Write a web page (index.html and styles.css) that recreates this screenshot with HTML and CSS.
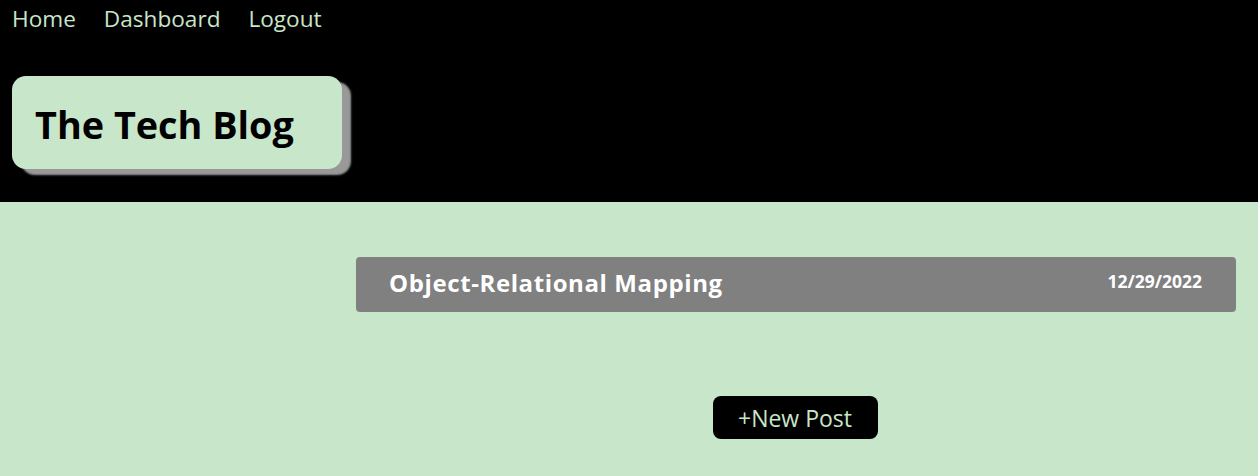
FILE: index.html
```html
<!DOCTYPE html>
<html>
<head>
<meta charset="utf-8">
<link rel="stylesheet" href="styles.css">
</head>
<body>
<header class="header">
  <nav class="nav">
    <a href="#">Home</a>
    <a href="#">Dashboard</a>
    <a href="#">Logout</a>
  </nav>
  <div class="title-box"><h1>The Tech Blog</h1></div>
</header>
<main class="main">
  <section class="posts">
    <div class="post">
      <span class="post-title">Object-Relational Mapping</span>
      <span class="post-date">12/29/2022</span>
    </div>
    <div class="actions"><button class="new-post">+New Post</button></div>
  </section>
</main>
</body>
</html>
```
FILE: styles.css
```css
html, body { margin: 0; padding: 0; }
body {
  font-family: "Open Sans", "Noto Sans", sans-serif;
  background: #c8e6c9;
  height: 476px;
  overflow: hidden;
}
.header {
  background: #000;
  height: 202px;
  padding: 0 12px;
  box-sizing: border-box;
  display: flex;
  flex-direction: column;
  align-items: flex-start;
}
.nav {
  display: flex;
  gap: 28px;
  height: 37px;
  align-items: center;
}
.nav a {
  color: #c8e6c9;
  text-decoration: none;
  font-size: 22.6px;
}
.title-box {
  margin-top: 39px;
  width: 330px;
  height: 93px;
  background: #c8e6c9;
  border-radius: 14px;
  box-shadow: 9px 6px 2px #999;
  box-sizing: border-box;
  padding-left: 23px;
  padding-top: 4px;
  display: flex;
  align-items: center;
}
.title-box h1 {
  margin: 0;
  font-size: 37.8px;
  font-weight: 700;
  color: #000;
}
.main {
  display: flex;
  justify-content: flex-end;
  padding: 55px 22px 0 0;
}
.posts {
  width: 880px;
  display: flex;
  flex-direction: column;
  align-items: center;
}
.post {
  align-self: stretch;
  height: 55px;
  background: #808080;
  border-radius: 4px;
  display: flex;
  align-items: center;
  justify-content: space-between;
  padding: 0 34px 0 33px;
  color: #fff;
  font-weight: 700;
}
.post-title { font-size: 24px; margin-top: -4px; letter-spacing: 0.6px; }
.post-date { font-size: 17.5px; margin-top: -7px; }
.actions { margin-top: 84px; margin-left: -2px; }
.new-post {
  background: #000;
  color: #c8e6c9;
  border: none;
  border-radius: 8px;
  font-family: inherit;
  font-size: 23px;
  width: 165px;
  height: 43px;
  padding: 0;
  cursor: pointer;
}
```
